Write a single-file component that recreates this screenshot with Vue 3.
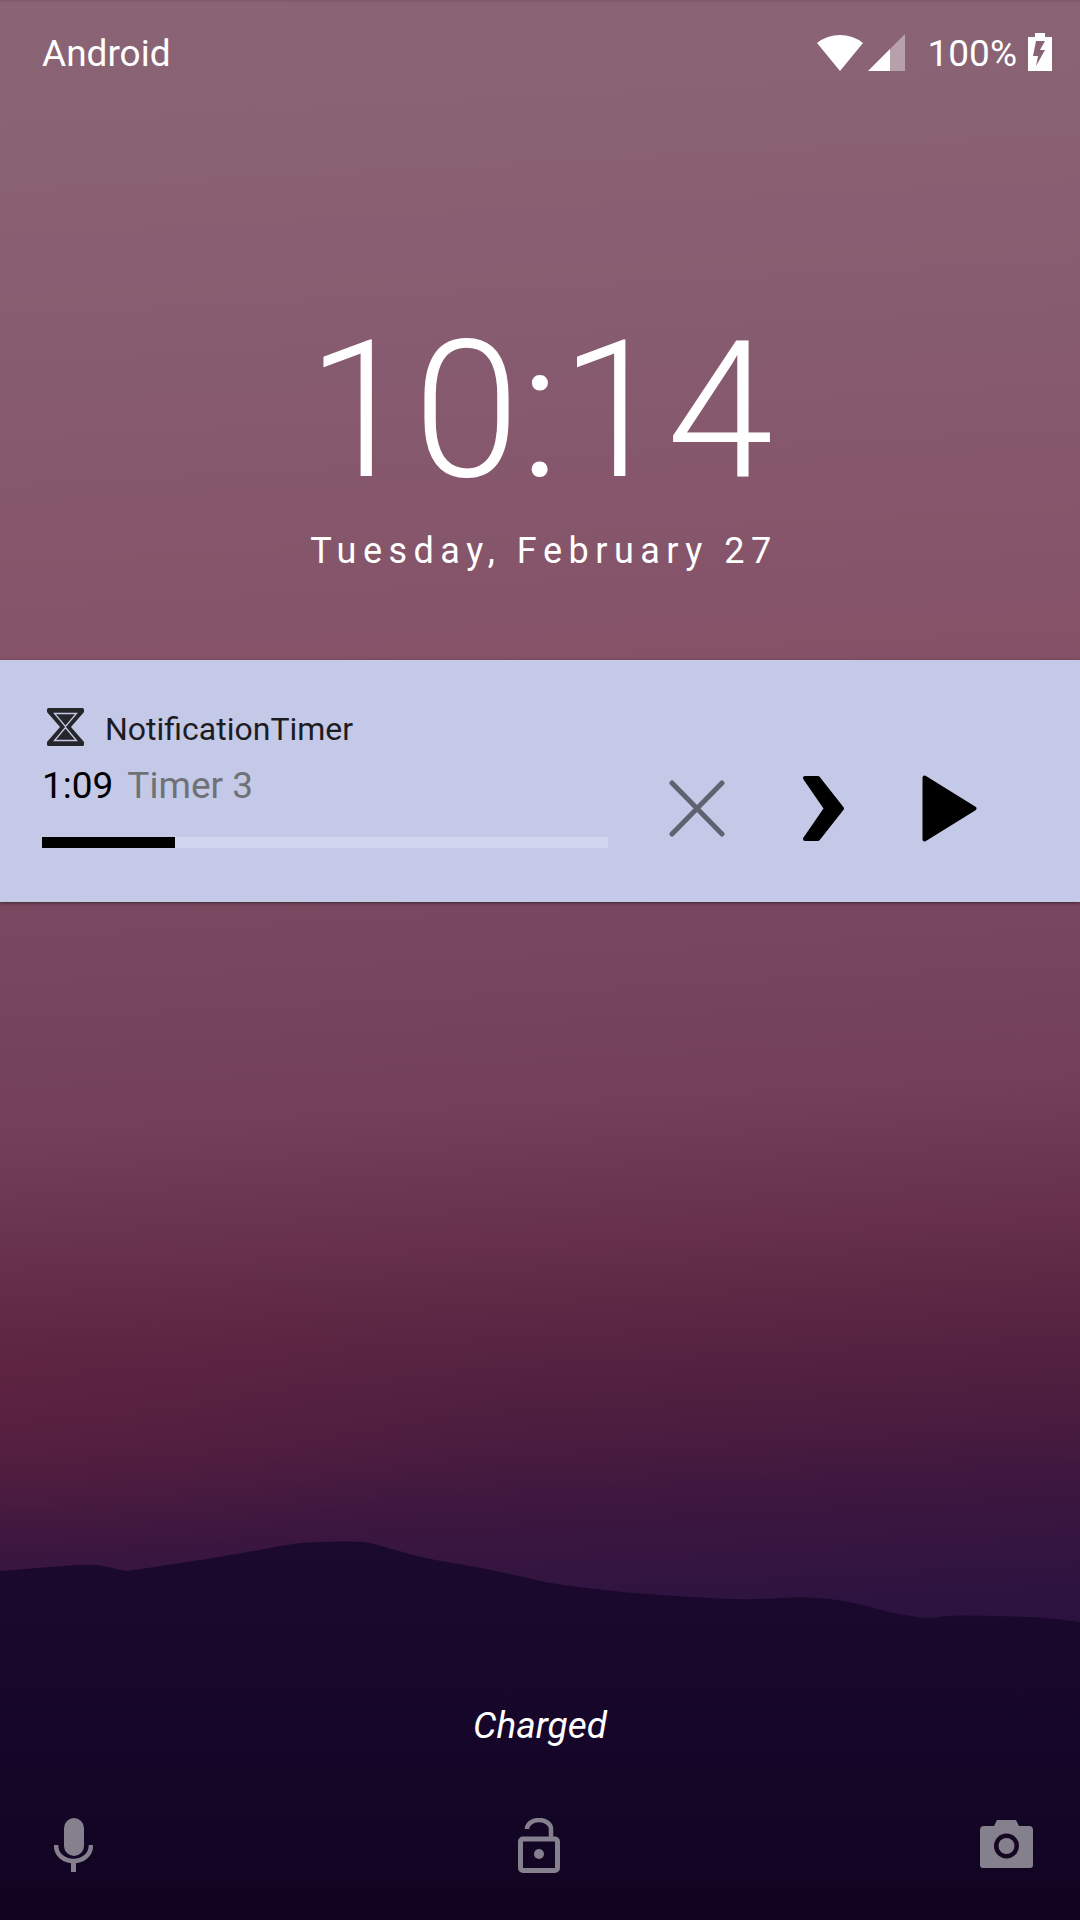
<template>
  <div class="lockscreen">
    <!-- ridge behind everything -->
    <svg class="ridge" viewBox="0 0 1080 420" preserveAspectRatio="none">
      <defs>
        <linearGradient id="ridgeFill" x1="0" y1="0" x2="0" y2="1">
          <stop offset="0" stop-color="#1c0a2e" />
          <stop offset="0.5" stop-color="#16062a" />
          <stop offset="1" stop-color="#110420" />
        </linearGradient>
      </defs>
      <path fill="url(#ridgeFill)" :d="ridgePath" />
    </svg>

    <header class="status-bar">
      <span class="carrier">Android</span>
      <div class="status-icons">
        <svg class="wifi" viewBox="0 0 46 37">
          <path d="M23 37 L0 9 A37 37 0 0 1 46 9 Z" fill="#fff" />
        </svg>
        <svg class="signal" viewBox="0 0 37 37">
          <path d="M22 15 L37 0 V37 H22 Z" fill="#fff" fill-opacity="0.4" />
          <path d="M0 37 L22 15 V37 Z" fill="#fff" />
        </svg>
        <span class="battery-pct">100%</span>
        <svg class="battery" viewBox="0 0 24 38">
          <path
            fill="#fff"
            fill-rule="evenodd"
            d="M0 4 H7 V0 H17 V4 H24 V38 H0 Z M8 8 L5 23 H10 L8 33 L17 17 H12 L17 8 Z"
          />
        </svg>
      </div>
    </header>

    <section class="clock">
      <div class="time">10:14</div>
      <div class="date">Tuesday, February 27</div>
    </section>

    <section class="notification">
      <div class="notif-main">
        <div class="app-row">
          <svg class="hourglass" viewBox="0 0 37 38">
            <path
              d="M1.5 1.5 H35.5 V3.5 L22 19 L35.5 34.5 V36.5 H1.5 V34.5 L15 19 L1.5 3.5 Z"
              fill="#25262b"
              stroke="#25262b"
              stroke-width="3"
              stroke-linejoin="round"
            />
            <path d="M7.5 5.5 H29.5 L18.5 18.5 Z" fill="none" stroke="#c5c9e8" stroke-width="1.3" />
            <path d="M18.5 19.5 L29.5 32.5 H7.5 Z" fill="none" stroke="#c5c9e8" stroke-width="1.3" />
          </svg>
          <span class="app-name">NotificationTimer</span>
        </div>
        <div class="timer-row">
          <span class="remaining">1:09</span>
          <span class="timer-name">Timer 3</span>
        </div>
        <div class="progress">
          <div class="progress-fill" :style="{ width: progress + '%' }"></div>
        </div>
      </div>
      <div class="actions">
        <svg class="act-close" viewBox="0 0 56 57">
          <path d="M3 3 L53 54 M53 3 L3 54" fill="none" stroke="#5f6270" stroke-width="5" stroke-linecap="round" />
        </svg>
        <svg class="act-next" viewBox="0 0 43 67">
          <path
            d="M3 3 H16 L40 33.5 L16 64 H3 L24 33.5 Z"
            fill="#000"
            stroke="#000"
            stroke-width="4"
            stroke-linejoin="round"
          />
        </svg>
        <svg class="act-play" viewBox="0 0 55 67">
          <path d="M2.5 2.5 L52.5 33.5 L2.5 64.5 Z" fill="#000" stroke="#000" stroke-width="4" stroke-linejoin="round" />
        </svg>
      </div>
    </section>

    <div class="spacer"></div>

    <div class="charged">Charged</div>

    <footer class="bottom-bar">
      <svg class="mic" viewBox="0 0 39 54">
        <rect x="10" y="0" width="20" height="38" rx="10" fill="#85808e" />
        <path d="M2 27 C2 37 10 43 19.5 43 C29 43 37 37 37 27" fill="none" stroke="#85808e" stroke-width="4.5" />
        <path d="M19.5 42 V54" stroke="#85808e" stroke-width="5" />
      </svg>
      <svg class="lock" viewBox="0 0 42 55">
        <path d="M9 11 A12 9 0 0 1 33 11 V20" fill="none" stroke="#85808e" stroke-width="4.5" />
        <rect x="2.5" y="21" width="37" height="31.5" rx="2.5" fill="none" stroke="#85808e" stroke-width="5" />
        <circle cx="21" cy="36" r="5" fill="#85808e" />
      </svg>
      <svg class="camera" viewBox="0 0 53 48">
        <path
          d="M17 0 H36 L39 6 H49 Q53 6 53 10 V45 Q53 48 50 48 H3 Q0 48 0 45 V10 Q0 6 4 6 H14 Z"
          fill="#85808e"
        />
        <circle cx="26.5" cy="26" r="12.5" fill="#150622" />
        <circle cx="26.5" cy="26" r="8" fill="#85808e" />
      </svg>
    </footer>
  </div>
</template>

<script setup>
const progress = 23.5

// ridge outline, y measured from the top of the svg (page y 1500)
const ridge = [
  [0, 71], [60, 66], [97, 64], [120, 70], [127, 71], [134, 70], [233, 55], [290, 44], [310, 42], [363, 41],
  [375, 44], [427, 59], [467, 65], [520, 76], [553, 84], [620, 92], [687, 97], [753, 100], [807, 96],
  [853, 102], [887, 112], [922, 118], [932, 118], [953, 115], [1040, 117], [1080, 122]
]

// round the corners a little with midpoints
const ridgePath = (() => {
  let d = `M${ridge[0][0]} ${ridge[0][1]}`
  for (let i = 1; i < ridge.length - 1; i++) {
    const [x, y] = ridge[i]
    const [nx, ny] = ridge[i + 1]
    d += ` Q${x} ${y} ${(x + nx) / 2} ${(y + ny) / 2}`
  }
  const last = ridge[ridge.length - 1]
  return d + ` L${last[0]} ${last[1]} V420 H0 Z`
})()
</script>

<style>
html,
body {
  margin: 0;
  padding: 0;
}
</style>

<style scoped>
.lockscreen {
  position: relative;
  width: 1080px;
  height: 1920px;
  overflow: hidden;
  display: flex;
  flex-direction: column;
  font-family: Roboto, "Liberation Sans", sans-serif;
  color: #fff;
  background:
    linear-gradient(to bottom, rgba(0, 0, 0, 0.1) 0, rgba(0, 0, 0, 0) 3px),
    radial-gradient(ellipse 500px 160px at 0px 1400px, rgba(110, 35, 65, 0.3), rgba(110, 35, 65, 0)),
    linear-gradient(
      177deg,
      #8a6474 0,
      #896273 150px,
      #875c70 350px,
      #855268 680px,
      #794860 930px,
      #733f5a 1130px,
      #66304a 1270px,
      #592542 1360px,
      #4c1d3f 1460px,
      #3d173f 1535px,
      #2c1340 1650px,
      #1c0a30 1974px
    );
}
.ridge {
  position: absolute;
  left: 0;
  top: 1500px;
  width: 1080px;
  height: 420px;
}
.status-bar {
  position: relative;
  height: 106px;
  box-sizing: border-box;
  padding: 33px 28px 0 42px;
  display: flex;
  justify-content: space-between;
  align-items: flex-start;
}
.carrier {
  font-size: 37px;
  line-height: 42px;
}
.status-icons {
  display: flex;
  align-items: flex-start;
}
.wifi {
  width: 46px;
  height: 37px;
  margin-top: 1px;
}
.signal {
  width: 37px;
  height: 37px;
  margin: 1px 0 0 5px;
}
.battery-pct {
  font-size: 37px;
  line-height: 42px;
  margin: 0 11px 0 23px;
}
.battery {
  width: 24px;
  height: 38px;
}
.clock {
  position: relative;
  height: 554px;
  text-align: center;
}
.time {
  font-size: 192px;
  font-weight: 300;
  line-height: 228px;
  margin-top: 191px;
}
.date {
  font-size: 36px;
  line-height: 44px;
  letter-spacing: 6.5px;
  margin-top: 4px;
  margin-left: 8px;
}
.notification {
  position: relative;
  height: 242px;
  background: #c5c9e8;
  box-shadow: 0 1px 3px rgba(0, 0, 0, 0.5);
  display: flex;
  justify-content: space-between;
  color: #000;
}
.notif-main {
  width: 566px;
  margin-left: 42px;
}
.app-row {
  display: flex;
  align-items: center;
  margin-top: 48px;
  padding-left: 5px;
}
.hourglass {
  width: 37px;
  height: 38px;
}
.app-name {
  position: relative;
  top: 2px;
  font-size: 32px;
  line-height: 38px;
  margin-left: 21px;
  color: #1c1d22;
}
.timer-row {
  display: flex;
  align-items: baseline;
  margin-top: 18px;
}
.remaining {
  font-size: 37px;
  line-height: 44px;
}
.timer-name {
  font-size: 37px;
  line-height: 44px;
  color: #707174;
  margin-left: 14px;
}
.progress {
  height: 11px;
  margin-top: 29px;
  background: #d1d6ee;
}
.progress-fill {
  height: 100%;
  background: #000;
}
.actions {
  display: flex;
  align-items: flex-start;
  padding: 115px 103px 0 0;
}
.act-close {
  width: 56px;
  height: 57px;
  margin-top: 5px;
}
.act-next {
  width: 43px;
  height: 67px;
  margin-left: 77px;
}
.act-play {
  width: 55px;
  height: 67px;
  margin-left: 77px;
}
.spacer {
  flex: 1;
}
.charged {
  position: relative;
  text-align: center;
  font-size: 37px;
  font-style: italic;
  line-height: 40px;
  margin-bottom: 72px;
}
.bottom-bar {
  position: relative;
  height: 102px;
  display: flex;
  align-items: flex-start;
  justify-content: space-between;
  padding: 0 47px 0 54px;
}
.mic {
  width: 39px;
  height: 54px;
}
.lock {
  position: relative;
  left: 2px;
  width: 42px;
  height: 55px;
}
.camera {
  width: 53px;
  height: 48px;
  margin-top: 2px;
}
</style>
